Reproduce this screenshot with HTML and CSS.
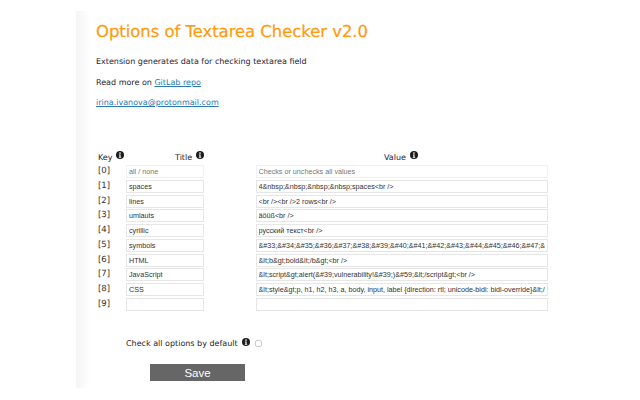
FILE: index.html
```html
<!DOCTYPE html>
<html lang="en">

<head>
  <meta charset="UTF-8">
  <meta name="viewport" content="width=device-width, initial-scale=1.0">
  <title>Options of Textarea Checker</title>
  <link rel="stylesheet" href="styles.css">
</head>

<body>
  <svg class="sprite" width="0" height="0">
    <symbol id="info" viewBox="0 0 16 16">
      <circle cx="8" cy="8" r="8" fill="#1c1c1c" />
      <circle cx="8" cy="4" r="1.7" fill="#fff" />
      <path d="M5.8 6.8h3.4v5.2h1.2v1.6H5.6V12h1.2V8.4h-1z" fill="#fff" />
    </symbol>
  </svg>

  <div class="panel">
    <h1>Options of Textarea Checker v2.0</h1>
    <p>Extension generates data for checking textarea field</p>
    <p>Read more on <a href="#">GitLab repo</a></p>
    <p><a href="#">irina.ivanova@protonmail.com</a></p>

    <div class="options">
      <div class="head head-key">Key <svg class="info"><use href="#info" /></svg></div>
      <div class="head head-title">Title <svg class="info"><use href="#info" /></svg></div>
      <div class="head head-value">Value <svg class="info"><use href="#info" /></svg></div>

      <span class="key">[0]</span>
      <input class="muted" value="all / none">
      <input class="muted" value="Checks or unchecks all values">

      <span class="key">[1]</span>
      <input value="spaces">
      <input value="4&amp;nbsp;&amp;nbsp;&amp;nbsp;&amp;nbsp;spaces&lt;br /&gt;">

      <span class="key">[2]</span>
      <input value="lines">
      <input value="&lt;br /&gt;&lt;br /&gt;2 rows&lt;br /&gt;">

      <span class="key">[3]</span>
      <input value="umlauts">
      <input value="äöüß&lt;br /&gt;">

      <span class="key">[4]</span>
      <input value="cyrillic">
      <input value="русский текст&lt;br /&gt;">

      <span class="key">[5]</span>
      <input value="symbols">
      <input value="&amp;#33;&amp;#34;&amp;#35;&amp;#36;&amp;#37;&amp;#38;&amp;#39;&amp;#40;&amp;#41;&amp;#42;&amp;#43;&amp;#44;&amp;#45;&amp;#46;&amp;#47;&amp;#48;">

      <span class="key">[6]</span>
      <input value="HTML">
      <input value="&amp;lt;b&amp;gt;bold&amp;lt;/b&amp;gt;&lt;br /&gt;">

      <span class="key">[7]</span>
      <input value="JavaScript">
      <input value="&amp;lt;script&amp;gt;alert(&amp;#39;vulnerability!&amp;#39;)&amp;#59;&amp;lt;/script&amp;gt;&lt;br /&gt;">

      <span class="key">[8]</span>
      <input value="CSS">
      <input value="&amp;lt;style&amp;gt;p, h1, h2, h3, a, body, input, label {direction: rtl; unicode-bidi: bidi-override}&amp;lt;/style&amp;gt;">

      <span class="key">[9]</span>
      <input>
      <input>
    </div>

    <div class="default-row">
      <label for="check-all">Check all options by default</label>
      <svg class="info"><use href="#info" /></svg>
      <input type="checkbox" id="check-all">
    </div>

    <button class="save">Save</button>
  </div>
</body>

</html>
```

FILE: styles.css
```css
body {
  margin: 0;
  background-color: #fff;
  font-family: "DejaVu Sans", sans-serif;
  color: #1c2433;
  text-rendering: geometricPrecision;
}

.sprite {
  display: block;
}

.panel {
  width: 564px;
  height: 377px;
  margin: 11px 0 0 76px;
  padding-left: 20px;
  box-sizing: border-box;
  overflow: hidden;
  background: linear-gradient(to right, #f5f5f5, #fff 14px);
}

h1 {
  margin: 0;
  padding-top: 10px;
  font-size: 16.4px;
  line-height: 22px;
  font-weight: normal;
  color: #ff9a0e;
  -webkit-text-stroke: 0.2px #ff9a0e;
}

p {
  margin: 10.5px 0 0;
  font-size: 8px;
  line-height: 10px;
}

h1 + p {
  margin-top: 14px;
}

a {
  color: #2a7ab0;
}

.options {
  display: grid;
  grid-template-columns: 30px 129.5px 292px;
  grid-auto-rows: 13px;
  row-gap: 1.72px;
  margin-top: 42.5px;
  font-size: 8px;
}

.options input:nth-of-type(even) {
  width: 292px;
}

.head {
  line-height: 13px;
  white-space: nowrap;
}

.head-key {
  margin-left: 2px;
}

.head-title {
  margin-left: 49px;
}

.head-value {
  margin-left: 128.5px;
}

.info {
  width: 8px;
  height: 8px;
  margin-left: 1px;
  vertical-align: 1px;
}

.key {
  margin-left: 2px;
  line-height: 13px;
  font-size: 8.5px;
  color: #333;
}

input {
  width: 78px;
  height: 13px;
  padding: 0 2px;
  box-sizing: border-box;
  border: 1px solid #e6e6e6;
  font-family: "Liberation Sans", sans-serif;
  font-size: 7.2px;
  color: #333;
  background: #fff;
  outline: none;
}

.muted {
  border-color: #f0f0f0;
  color: #777;
}

.default-row {
  display: flex;
  align-items: center;
  margin: 26.5px 0 0 30px;
  height: 12px;
  font-size: 8px;
}

.default-row .info {
  margin-left: 4px;
  position: relative;
  top: -1px;
}

.default-row input {
  appearance: none;
  width: 7px;
  height: 7px;
  margin: 0 0 0 5px;
  padding: 0;
  border: 1px solid #ccc;
  border-radius: 2px;
}

.save {
  display: block;
  width: 95px;
  height: 17px;
  margin: 15px 0 0 54px;
  padding: 0;
  border: 0;
  background-color: #666;
  color: #fff;
  font-family: "Liberation Sans", sans-serif;
  font-size: 11.5px;
}
```
